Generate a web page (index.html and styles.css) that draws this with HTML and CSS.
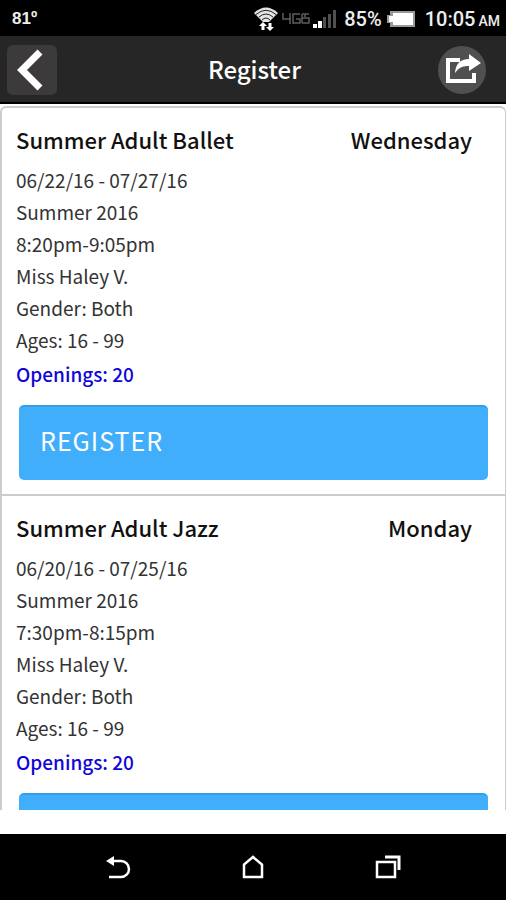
FILE: index.html
```html
<!DOCTYPE html>
<html lang="en">
<head>
<meta charset="utf-8">
<meta name="viewport" content="width=device-width, initial-scale=1">
<title>Register</title>
<link rel="stylesheet" href="styles.css">
</head>
<body>
<div class="status">
  <span class="temp">81º</span>
  <div class="indicators">
    <svg class="wifi" width="24" height="24" viewBox="0 0 24 24" aria-hidden="true">
      <path d="M0 6Q12-5 24 6L15 15H9Z" fill="#e4e4e4"/>
      <path d="M2 7.500Q12-1 22 7.500M5 10Q12 4 19 10M8 13Q12 9 16 13" fill="none" stroke="#222" stroke-width="1"/>
      <path d="M5 15h14v9H5z" fill="#000"/>
      <path d="M9 15l4 4h-2.500v4h-3v-4H5zM16 24l4-4h-2.500v-4h-3v4H12z" fill="#fff"/>
    </svg>
    <svg class="lte" width="28" height="12" viewBox="0 0 28 12" fill="none" stroke="#5c5c5c" stroke-width="1.500" aria-hidden="true">
      <path d="M1 0v6h8M8 0v11M18 1h-7v9h7V6h-4M20 1v9M20 1h7M20 5h7v5h-7M23 1v3"/>
    </svg>
    <svg class="signal" width="24" height="18" viewBox="0 0 24 18" aria-hidden="true">
      <path d="M0 14h4v4H0zM5 11h4v7H5z" fill="#fff"/>
      <path d="M10 7h3v11h-3zM15 4h3v14h-3zM20 0h3v18h-3z" fill="#505050"/>
    </svg>
    <span class="percent">85%</span>
    <svg class="battery" width="28" height="16" viewBox="0 0 28 16" aria-hidden="true">
      <path d="M3 0h25v16H3v-4H0V4h3z" fill="#999"/>
      <path d="M6 2h20v12H6v-3H2V5h4z" fill="#fff"/>
    </svg>
    <span class="time">10:05<small>AM</small></span>
  </div>
</div>
<header class="bar">
  <button class="back" type="button" aria-label="Back">
    <svg width="50" height="50" viewBox="0 0 50 50" aria-hidden="true"><path d="M33 7L15 25L33 43" fill="none" stroke="#fff" stroke-width="7"/></svg>
  </button>
  <h1>Register</h1>
  <button class="share" type="button" aria-label="Share">
    <svg width="48" height="48" viewBox="0 0 48 48" aria-hidden="true">
      <path d="M22 14H10v21h26v-8" fill="none" stroke="#fff" stroke-width="4"/>
      <path d="M17 27Q18 13 31 13V8l12 9-12 8v-5Q22 19 17 27Z" fill="#fff"/>
    </svg>
  </button>
</header>
<main class="list">
  <section class="item">
    <div class="heading"><h2>Summer Adult Ballet</h2><span>Wednesday</span></div>
    <ul>
      <li>06/22/16 - 07/27/16</li>
      <li>Summer 2016</li>
      <li>8:20pm-9:05pm</li>
      <li>Miss Haley V.</li>
      <li>Gender: Both</li>
      <li>Ages: 16 - 99</li>
      <li class="openings">Openings: 20</li>
    </ul>
    <button class="register" type="button">REGISTER</button>
  </section>
  <section class="item">
    <div class="heading"><h2>Summer Adult Jazz</h2><span>Monday</span></div>
    <ul>
      <li>06/20/16 - 07/25/16</li>
      <li>Summer 2016</li>
      <li>7:30pm-8:15pm</li>
      <li>Miss Haley V.</li>
      <li>Gender: Both</li>
      <li>Ages: 16 - 99</li>
      <li class="openings">Openings: 20</li>
    </ul>
    <button class="register" type="button">REGISTER</button>
  </section>
</main>
<nav class="system">
  <button type="button" aria-label="Back">
    <svg width="26" height="24" viewBox="0 0 26 24" aria-hidden="true"><path d="M7 6h9a8 8 0 0 1 0 16H4" fill="none" stroke="#fff" stroke-width="2.500"/><path d="M1 6l8-5v10z" fill="#fff"/></svg>
  </button>
  <button type="button" aria-label="Home">
    <svg width="26" height="24" viewBox="0 0 26 24" aria-hidden="true"><path d="M4 22V9.500L13 2l9 7.500V22z" fill="none" stroke="#fff" stroke-width="2.500"/></svg>
  </button>
  <button type="button" aria-label="Recent apps">
    <svg width="26" height="24" viewBox="0 0 26 24" fill="none" stroke="#fff" aria-hidden="true"><path d="M2 7h18v15H2z" stroke-width="2.500"/><path d="M10 2h14v13" stroke-width="3"/></svg>
  </button>
</nav>
</body>
</html>
```
FILE: styles.css
```css
* { box-sizing: border-box; }
body {
  margin: 0;
  height: 100vh;
  display: flex;
  flex-direction: column;
  background: #fff;
  color: #111;
  font-family: "Noto Sans CJK SC", sans-serif;
}
button { padding: 0; border: 0; background: none; font: inherit; color: #fff; }
svg { display: block; flex: none; }
h1, h2, ul { margin: 0; padding: 0; }

.status {
  flex: none;
  height: 36px;
  padding: 2px 6px 0 12px;
  display: flex;
  align-items: center;
  justify-content: space-between;
  background: #000;
  color: #eee;
  font-family: Roboto, sans-serif;
  font-size: 20px;
  font-weight: 500;
}
.temp { font-family: "Liberation Sans Narrow", "Liberation Sans", sans-serif; font-size: 17px; font-weight: 700; }
.indicators { display: flex; align-items: center; }
.lte { margin: 0 3px 0 4px; }
.signal { margin-right: 7px; }
.battery { margin: 0 10px 0 5px; }
.time small { margin-left: 3px; font-size: 14px; }

.bar {
  flex: none;
  height: 68px;
  padding: 2px 20px 0 7px;
  display: grid;
  grid-template-columns: 64px 1fr 48px;
  align-items: center;
  background: #262626;
  border-bottom: 2px solid #000;
  color: #fff;
}
.bar h1 { margin-bottom: 2px; font-size: 24px; font-weight: 500; line-height: 32px; text-align: center; }
.back { width: 50px; height: 50px; border-radius: 6px; background: #3c3a3b; }
.share { width: 48px; height: 48px; border-radius: 50%; background: #505050; }

.list {
  flex: 1;
  min-height: 0;
  overflow-y: auto;
  scrollbar-width: none;
  margin: 2px 0 24px;
  border: solid #ccc;
  border-width: 2px 1px 0 2px;
  border-radius: 6px 6px 0 0;
}
.item { padding: 15px 17px 14px 14px; border-bottom: 2px solid #ccc; }
.heading {
  display: flex;
  justify-content: space-between;
  margin-bottom: 9px;
  padding-right: 16px;
  font-size: 22px;
  font-weight: 500;
  line-height: 32px;
}
.heading h2 { font: inherit; }
.item ul { list-style: none; color: #333; font-size: 19px; font-weight: 400; line-height: 32px; }
.item .openings { padding-top: 2px; color: #1106d8; font-weight: 500; }
.register {
  display: block;
  width: calc(100% - 3px);
  height: 75px;
  margin: 15px 0 0 3px;
  padding: 0 21px 8px;
  border-radius: 5px;
  border-top: 2px solid #32a0e8;
  background: #41aefb;
  font-size: 25px;
  letter-spacing: 1px;
  text-align: left;
}

.system {
  flex: none;
  height: 66px;
  display: flex;
  justify-content: center;
  gap: 109px;
  background: #000;
}
```
